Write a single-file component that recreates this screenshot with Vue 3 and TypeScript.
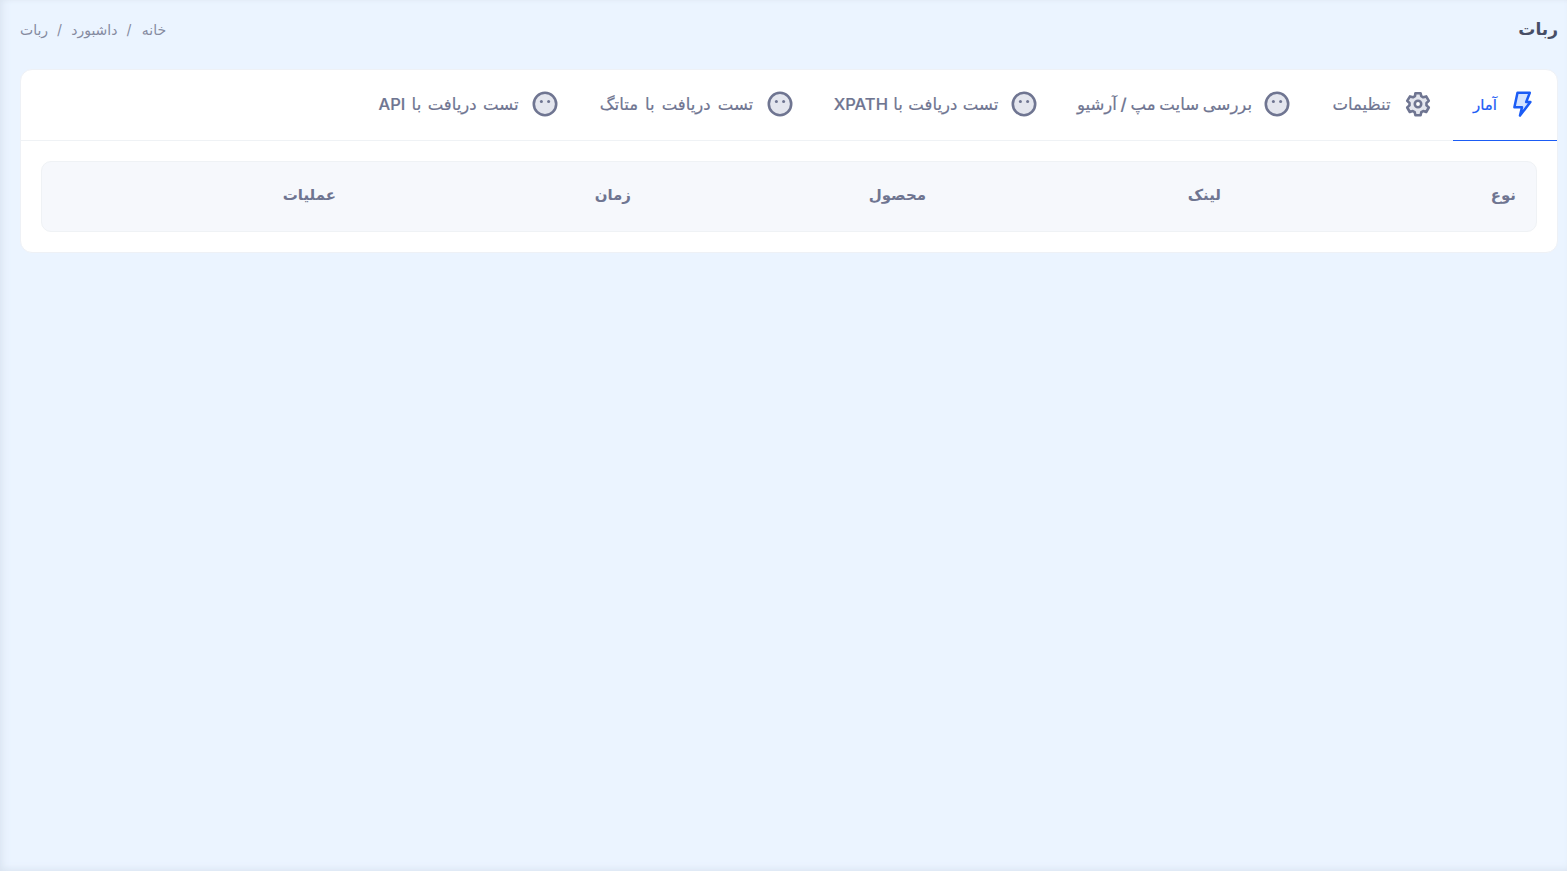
<script setup lang="ts">
interface Tab { label: string; icon: 'bolt' | 'gear' | 'face'; width: number; spread: number; active?: boolean }
const tabs: Tab[] = [
  { label: 'آمار', icon: 'bolt', width: 24, spread: 0, active: true },
  { label: 'تنظیمات', icon: 'gear', width: 61, spread: 0 },
  { label: 'بررسی سایت مپ / آرشیو', icon: 'face', width: 173, spread: -0.6 },
  { label: 'تست دریافت با XPATH', icon: 'face', width: 164, spread: 1 },
  { label: 'تست دریافت با متاتگ', icon: 'face', width: 155, spread: 2.6 },
  { label: 'تست دریافت با API', icon: 'face', width: 141, spread: 2 },
]
const crumbs = ['خانه', 'داشبورد', 'ربات']
const columns = ['نوع', 'لینک', 'محصول', 'زمان', 'عملیات']
</script>

<template>
  <div class="page" dir="rtl">
    <header class="head">
      <h1 class="title">ربات</h1>
      <nav class="crumbs">
        <template v-for="(c, i) in crumbs" :key="c">
          <span v-if="i > 0" class="sep">/</span>
          <span class="crumb">{{ c }}</span>
        </template>
      </nav>
    </header>
    <section class="card">
      <div class="tabs">
        <div v-for="t in tabs" :key="t.label" class="tab" :class="{ active: t.active }">
          <svg class="icon" viewBox="0 0 28 28" fill="none">
            <template v-if="t.icon === 'bolt'">
              <path d="M8.5 2.8 H20.8 L17.2 12 H21.4 L11 25.6 L13 17.2 H5.4 Z" fill="#d4e3ff" stroke="#1b5cf5" stroke-width="2.5" stroke-linejoin="round" />
            </template>
            <template v-else-if="t.icon === 'gear'">
              <path d="M11.4 3.2h5.2l.7 3 1.9 1.1 3-.9 2.6 4.5-2.3 2.1v2.4l2.3 2.1-2.6 4.5-3-.9-1.9 1.1-.7 3h-5.2l-.7-3-1.9-1.1-3 .9-2.6-4.5 2.3-2.1V13l-2.3-2.1L6 6.4l3 .9L11 6.2z" fill="#e4e6ee" stroke="#6f7591" stroke-width="2.6" stroke-linejoin="round" />
              <circle cx="14" cy="14" r="3.2" fill="#fff" stroke="#6f7591" stroke-width="2.6" />
            </template>
            <template v-else>
              <circle cx="14" cy="14" r="11.2" fill="#e4e6ee" stroke="#6f7591" stroke-width="2.6" />
              <circle cx="10.4" cy="11.6" r="1.5" fill="#6f7591" />
              <circle cx="17.6" cy="11.6" r="1.5" fill="#6f7591" />
            </template>
          </svg>
          <span class="label" :style="{ width: t.width + 'px', wordSpacing: t.spread + 'px' }">{{ t.label }}</span>
        </div>
      </div>
      <div class="body">
        <div class="table-head">
          <div v-for="c in columns" :key="c" class="cell">{{ c }}</div>
        </div>
      </div>
    </section>
  </div>
</template>

<style>
html, body { margin: 0; background: #ebf4ff; }
</style>

<style scoped>
.page {
  box-sizing: border-box;
  height: 871px;
  padding: 0 9px 0 20px;
  overflow: hidden;
  background: #ebf4ff;
  box-shadow: inset 8px 0 10px -6px #d9e3f0, inset 0 -6px 8px -5px #d9e3f0, inset 0 3px 5px -3px #e0e8f2;
  font-family: Inter, "DejaVu Sans", sans-serif;
  color: #5e6278;
}
.head {
  height: 69px;
  display: flex;
  align-items: center;
  justify-content: space-between;
  padding-bottom: 11px;
  box-sizing: border-box;
}
.title { margin: 0; font-size: 17px; font-weight: 700; color: #474e66; }
.crumbs { display: flex; gap: 9px; font-size: 14px; color: #858aa0; }
.crumb:first-child { min-width: 27px; text-align: center; }
.card {
  width: 1538px;
  background: #fff;
  border: 1px solid #eef1f6;
  border-radius: 12px;
  box-sizing: border-box;
  height: 184px;
}
.tabs { display: flex; height: 71px; padding-bottom: 1px; box-sizing: border-box; border-bottom: 1px solid #eff2f5; }
.tab {
  display: flex;
  align-items: center;
  gap: 12px;
  padding: 0 20px 2px;
  margin-bottom: -2px;
  border-bottom: 1px solid transparent;
  color: #6f7591;
  font-size: 16.5px;
  font-weight: 500;
  white-space: nowrap;
  -webkit-text-stroke: 0.2px currentColor;
}
.tab.active { color: #1b5cf5; border-bottom-color: #1b5cf5; font-size: 15px; margin-inline-end: 1px; }
.icon { width: 28px; height: 28px; flex: none; }
.label { display: flex; justify-content: center; }
.body { padding: 20px; }
.table-head {
  display: grid;
  grid-template-columns: repeat(5, 295px);
  height: 71px;
  align-items: center;
  background: #f6f8fc;
  border: 1px solid #eff2f5;
  border-radius: 10px;
  box-sizing: border-box;
  padding: 0 20px 4px;
  font-size: 15px;
  font-weight: 700;
  color: #6f7591;
}
</style>
